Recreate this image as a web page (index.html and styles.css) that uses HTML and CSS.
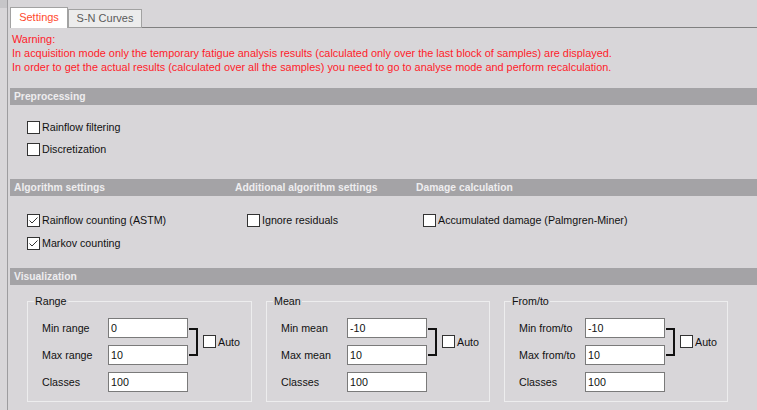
FILE: index.html
```html
<!DOCTYPE html>
<html lang="en">
<head>
    <meta charset="UTF-8">
    <meta name="viewport" content="width=device-width, initial-scale=1.0">
    <title>Fatigue Analysis Settings</title>
    <link rel="stylesheet" href="styles.css">
</head>
<body>
    <div class="corner"></div>
    <div class="frame">
        <!-- Tab strip -->
        <div class="tabs">
            <div class="tab active">Settings</div>
            <div class="tab">S-N Curves</div>
            <div class="tab-line"></div>
        </div>

        <div class="page">
            <div class="warning">
                <p>Warning:</p>
                <p>In acquisition mode only the temporary fatigue analysis results (calculated only over the last block of samples) are displayed.</p>
                <p>In order to get the actual results (calculated over all the samples) you need to go to analyse mode and perform recalculation.</p>
            </div>

            <!-- Preprocessing -->
            <div class="bar"><span>Preprocessing</span></div>
            <div class="section pre">
                <label class="check"><span class="box"></span>Rainflow filtering</label>
                <label class="check"><span class="box"></span>Discretization</label>
            </div>

            <!-- Algorithm -->
            <div class="bar">
                <span class="head-1">Algorithm settings</span>
                <span class="head-2">Additional algorithm settings</span>
                <span>Damage calculation</span>
            </div>
            <div class="section algo">
                <div class="col col-1">
                    <label class="check"><span class="box"><svg viewBox="0 0 11 11" width="11" height="11"><path d="M1.5 5.5 L4 8 L9.5 2.5" fill="none" stroke="#333" stroke-width="1"/></svg></span>Rainflow counting (ASTM)</label>
                    <label class="check"><span class="box"><svg viewBox="0 0 11 11" width="11" height="11"><path d="M1.5 5.5 L4 8 L9.5 2.5" fill="none" stroke="#333" stroke-width="1"/></svg></span>Markov counting</label>
                </div>
                <div class="col col-2">
                    <label class="check"><span class="box"></span>Ignore residuals</label>
                </div>
                <div class="col">
                    <label class="check"><span class="box"></span>Accumulated damage (Palmgren-Miner)</label>
                </div>
            </div>

            <!-- Visualization -->
            <div class="bar"><span>Visualization</span></div>
            <div class="groups">
                <fieldset class="group">
                    <legend>Range</legend>
                    <div class="grid">
                        <span class="lbl">Min range</span>
                        <div class="field">0</div>
                        <div class="bracket"></div>
                        <label class="check auto"><span class="box"></span>Auto</label>
                        <span class="lbl">Max range</span>
                        <div class="field">10</div>
                        <span class="lbl">Classes</span>
                        <div class="field">100</div>
                    </div>
                </fieldset>
                <fieldset class="group">
                    <legend>Mean</legend>
                    <div class="grid">
                        <span class="lbl">Min mean</span>
                        <div class="field">-10</div>
                        <div class="bracket"></div>
                        <label class="check auto"><span class="box"></span>Auto</label>
                        <span class="lbl">Max mean</span>
                        <div class="field">10</div>
                        <span class="lbl">Classes</span>
                        <div class="field">100</div>
                    </div>
                </fieldset>
                <fieldset class="group">
                    <legend>From/to</legend>
                    <div class="grid">
                        <span class="lbl">Min from/to</span>
                        <div class="field">-10</div>
                        <div class="bracket"></div>
                        <label class="check auto"><span class="box"></span>Auto</label>
                        <span class="lbl">Max from/to</span>
                        <div class="field">10</div>
                        <span class="lbl">Classes</span>
                        <div class="field">100</div>
                    </div>
                </fieldset>
            </div>
        </div>
    </div>
</body>
</html>
```

FILE: styles.css
```css
* {
    margin: 0;
    padding: 0;
    box-sizing: border-box;
}

body {
    display: flex;
    width: 757px;
    height: 410px;
    overflow: hidden;
    background-color: #d8d6d9;
    font-family: "Liberation Sans", Arial, sans-serif;
    font-size: 10.7px;
    color: #111;
}

/* darker strip in the top left corner */
.corner {
    width: 7px;
    height: 8px;
    background-color: #c6c5c8;
}

.frame {
    flex: 1;
    padding-left: 2px;
    border-left: 1px solid #9d9c9f;
    height: 410px;
}

/* Tabs */
.tabs {
    display: flex;
    align-items: flex-end;
    height: 28px;
    font-size: 11px;
}

.tab {
    height: 19px;
    width: 74px;
    border: 1px solid #a2a2a2;
    background-color: #ececec;
    color: #5a5a5a;
    line-height: 17px;
    text-align: center;
}

.tab.active {
    height: 21px;
    width: 58px;
    border-bottom: none;
    background-color: #fff;
    color: #ff4a2e;
    line-height: 19px;
}

.tab-line {
    flex: 1;
    border-bottom: 1px solid #808080;
}

/* Warning text */
.warning {
    padding: 4px 0 0 2px;
    color: #ff1c2a;
    font-size: 10.9px;
    line-height: 14px;
}

/* Section header bars */
.bar {
    display: flex;
    height: 17px;
    margin-top: 14px;
    padding-left: 4px;
    background-color: #a4a3a6;
    color: #eeedef;
    font-weight: bold;
    font-size: 10.3px;
    line-height: 17px;
}

.head-1 { width: 221px; }
.head-2 { width: 181px; }

.section {
    padding-left: 17px;
}

.section.pre {
    display: flex;
    flex-direction: column;
    gap: 4px;
    padding-top: 13px;
    padding-bottom: 7px;
}

.section.algo {
    display: flex;
    padding-top: 15px;
    padding-bottom: 2px;
}

.col {
    display: flex;
    flex-direction: column;
    gap: 5px;
}

.col-1 { width: 220px; }
.col-2 { width: 176px; }

.check {
    display: flex;
    align-items: center;
    height: 18px;
    color: #111;
}

.box {
    width: 13px;
    height: 13px;
    margin-right: 2px;
    border: 1px solid #333;
    background-color: #fff;
}

.box svg {
    display: block;
}

/* Visualization groups */
.groups {
    display: flex;
    gap: 14px;
    padding-left: 17px;
    margin-top: 9px;
}

.group {
    width: 224px;
    height: 108px;
    border: 1px solid #ededee;
    padding: 10px 0 0 14px;
}

.group:first-child {
    width: 225px;
}

.group legend {
    margin-left: -8px;
    padding: 0 1px;
    line-height: 14px;
    color: #111;
}

.grid {
    display: grid;
    grid-template-columns: 66px 80px 10px auto;
    grid-template-rows: 20px 20px 20px;
    row-gap: 7px;
    align-items: center;
}

.field {
    height: 20px;
    border: 1px solid #7a7a7a;
    background-color: #fff;
    padding-left: 2px;
    line-height: 18px;
}

.bracket {
    grid-column: 3;
    grid-row: 1 / 3;
    align-self: stretch;
    margin: 10px 0 9px 1px;
    border: 2px solid #111;
    border-left: none;
}

.auto {
    grid-column: 4;
    grid-row: 1 / 3;
    margin-left: 5px;
}
```
